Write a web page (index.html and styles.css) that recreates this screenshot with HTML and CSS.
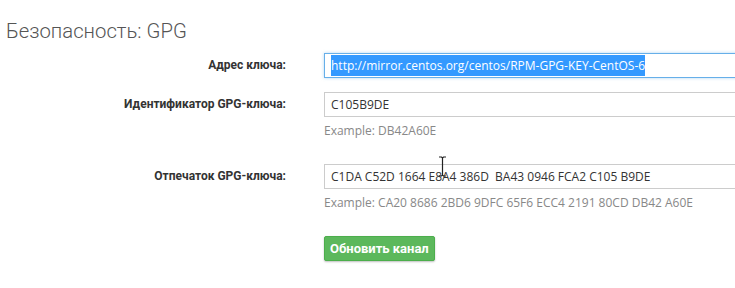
FILE: index.html
```html
<!DOCTYPE html>
<html lang="ru">

<head>
    <meta charset="UTF-8" />
    <meta name="viewport" content="width=device-width, initial-scale=1" />
    <title>Безопасность: GPG</title>
    <link rel="stylesheet" href="styles.css">
</head>

<body>
    <div class="page">
        <h2 class="title">Безопасность: GPG</h2>

        <form class="form">
            <div class="row">
                <label class="label">Адрес ключа:</label>
                <div class="control">
                    <div class="input focused"><span class="selected">http://mirror.centos.org/centos/RPM-GPG-KEY-CentOS-6</span></div>
                </div>
            </div>

            <div class="row">
                <label class="label">Идентификатор GPG-ключа:</label>
                <div class="control">
                    <div class="input">C105B9DE</div>
                    <div class="help">Example: DB42A60E</div>
                </div>
            </div>

            <div class="row row-gap">
                <label class="label">Отпечаток GPG-ключа:</label>
                <div class="control">
                    <div class="input">C1DA C52D 1664 E8A4 386D&nbsp; BA43 0946 FCA2 C105 B9DE</div>
                    <div class="help">Example: CA20 8686 2BD6 9DFC 65F6 ECC4 2191 80CD DB42 A60E</div>
                </div>
            </div>

            <div class="row row-btn">
                <div></div>
                <div class="control">
                    <button type="button" class="btn">Обновить канал</button>
                </div>
            </div>
        </form>

        <!-- mouse cursor -->
        <svg class="cursor" width="9" height="21" viewBox="0 0 9 21">
            <path d="M1 1h2.5l1 1 1-1H8M4.5 2v17M1 20h2.5l1-1 1 1H8" fill="none" stroke="#222" stroke-width="1.2"/>
        </svg>
    </div>
</body>

</html>
```

FILE: styles.css
```css
body {
    margin: 0;
    background: #fff;
    overflow: hidden;
    font-family: 'Open Sans', 'Noto Sans', sans-serif;
    color: #333;
}

.page {
    position: relative;
    padding: 19px 0 0 6px;
}

.title {
    font-family: Roboto, 'Open Sans', sans-serif;
    font-weight: 300;
    font-size: 20.3px;
    line-height: 24px;
    color: #555;
    margin: 0;
}

.form {
    margin-top: 10px;
}

.row {
    display: grid;
    grid-template-columns: 280px 450px;
    column-gap: 38px;
    align-items: start;
    margin-bottom: 14px;
}

.row-gap {
    margin-top: 26px;
}

.row-btn {
    margin-top: 26px;
}

.label {
    font-family: Roboto, 'Open Sans', sans-serif;
    font-weight: 700;
    font-size: 12px;
    line-height: 25px;
    text-align: right;
    color: #333;
}

.input {
    height: 25px;
    box-sizing: border-box;
    border: 1px solid #ccc;
    padding: 0 6px;
    font-size: 12px;
    line-height: 23px;
    color: #333;
    white-space: nowrap;
}

.input.focused {
    border-color: #66afe9;
    box-shadow: 0 0 3px rgb(102 175 233 / 0.5);
}

.selected {
    background: #3399ff;
    color: #fff;
    padding: 2px 0;
}

.help {
    font-size: 12px;
    color: #888;
    margin-top: 7px;
    line-height: 14px;
}

.btn {
    font-family: Roboto, 'Open Sans', sans-serif;
    font-weight: 700;
    font-size: 13px;
    color: #fff;
    background: #5cb85c;
    border: 1px solid #4cae4c;
    border-radius: 2px;
    height: 25px;
    padding: 0 5px;
    box-shadow: 0 1px 2px rgb(0 0 0 / 0.25);
    cursor: pointer;
}

.cursor {
    position: absolute;
    left: 438px;
    top: 156px;
}
```
